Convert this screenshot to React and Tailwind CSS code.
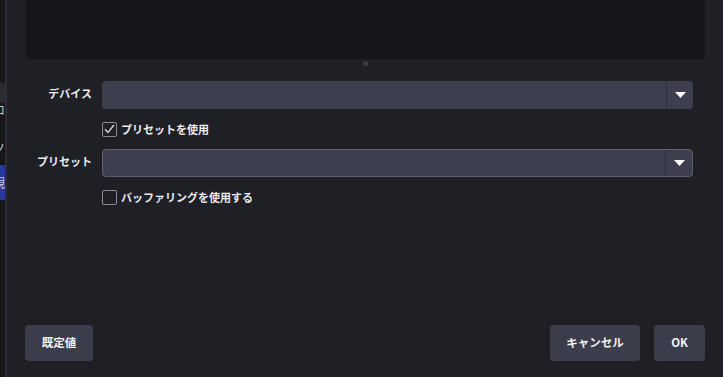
import React from "react";

const font = { fontFamily: '"Noto Sans CJK JP", "Noto Sans", sans-serif' };

function Combo({ focused }) {
  return (
    <div
      className={`flex h-[28px] items-stretch rounded-[4px] bg-[#3d3f4e] ${
        focused ? "border border-[#5d5f6f]" : ""
      }`}
    >
      <div className="flex-1" />
      <div className="flex w-[27px] items-center justify-center border-l border-[#2f303b]">
        <svg width="11" height="6" viewBox="0 0 11 6">
          <path d="M0 0 L11 0 L5.5 6 Z" fill="#ffffff" />
        </svg>
      </div>
    </div>
  );
}

function Check({ checked, label }) {
  return (
    <div className="flex h-[14px] items-center gap-[4px]">
      <div className="flex h-[15px] w-[15px] items-center justify-center rounded-[2px] border-[1.5px] border-[#8b8c93]">
        {checked && (
          <svg width="11" height="10" viewBox="0 0 11 10">
            <path
              d="M1 5.2 L4 8.4 L10 1"
              fill="none"
              stroke="#d8d8dc"
              strokeWidth="1.4"
            />
          </svg>
        )}
      </div>
      <span className="text-[11px] font-semibold leading-none text-[#ececef]">
        {label}
      </span>
    </div>
  );
}

function Btn({ children, w }) {
  return (
    <div
      className={`flex h-[36px] items-center justify-center rounded-[4px] bg-[#3c3d4a] text-[11.5px] font-semibold text-[#f2f2f4] ${w}`}
    >
      {children}
    </div>
  );
}

export default function App() {
  return (
    <div
      className="flex h-[377px] w-[723px] overflow-hidden bg-[#1f2026]"
      style={font}
    >
      {/* background window strip */}
      <div className="flex w-[5px] flex-col bg-[#16171b]">
        <div className="h-[83px]" />
        <div className="h-[20px] bg-[#2a2b33]" />
        <div className="flex h-[14px] items-center justify-end overflow-hidden">
          <span className="shrink-0 text-[12px] leading-none text-[#c8c8cc]">ロ</span>
        </div>
        <div className="h-[24px]" />
        <div className="flex h-[14px] items-center justify-end overflow-hidden">
          <span className="shrink-0 text-[12px] leading-none text-[#c8c8cc]">ソ</span>
        </div>
        <div className="h-[10px]" />
        <div className="flex h-[35px] items-center justify-end overflow-hidden bg-[#24399a]">
          <span className="shrink-0 text-[12px] leading-none text-[#c8cbe0]">規</span>
        </div>
      </div>
      <div className="w-[2px] bg-[#2d2e35]" />

      {/* dialog */}
      <div className="flex flex-1 flex-col">
        <div className="ml-[19px] mr-[18px] h-[59px] bg-[#15161b]" />
        <div className="mx-auto mt-[2px] h-[5px] w-[5px] rounded-full bg-[#3b3c43]" />

        <div className="mt-[15px] grid grid-cols-[85px_1fr] gap-x-[10px] gap-y-[13px] pr-[30px]">
          <div className="flex items-center justify-end pb-[4px] text-[11px] font-semibold text-[#ececef]">
            デバイス
          </div>
          <Combo />

          <div />
          <Check checked label="プリセットを使用" />

          <div className="flex items-center justify-end pb-[4px] text-[11px] font-semibold text-[#ececef]">
            プリセット
          </div>
          <Combo focused />

          <div />
          <Check label="バッファリングを使用する" />
        </div>

        <div className="mt-auto mb-[16px] flex items-center pl-[18px] pr-[18px]">
          <Btn w="w-[68px]">既定値</Btn>
          <div className="flex-1" />
          <Btn w="w-[90px]">キャンセル</Btn>
          <div className="w-[14px]" />
          <Btn w="w-[51px]">OK</Btn>
        </div>
      </div>
    </div>
  );
}
